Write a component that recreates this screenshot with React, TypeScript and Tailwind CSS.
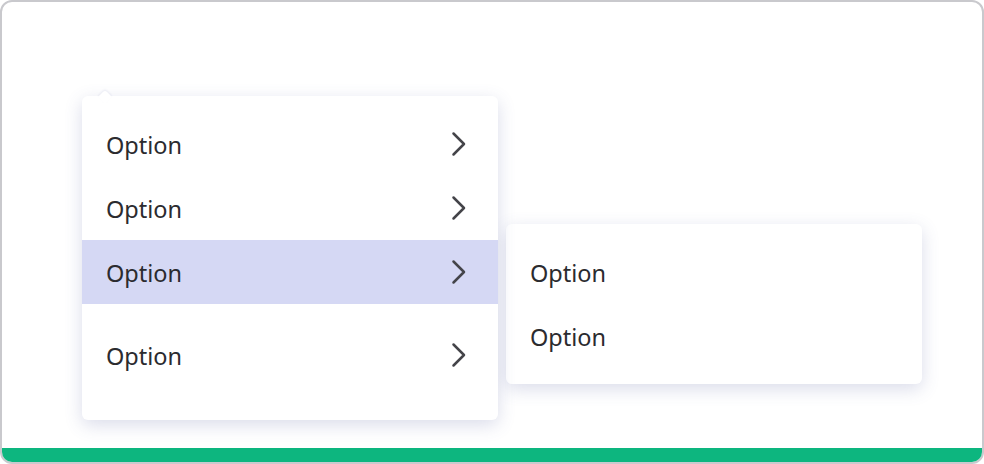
const font = { fontFamily: '"Noto Sans", "Open Sans", sans-serif' };

function Chevron() {
    return (
        <svg width="16" height="26" viewBox="0 0 16 26" fill="none" className="text-[#444449]">
            <path d="M2.5 2.5 L13 13 L2.5 23.5" stroke="currentColor" strokeWidth="2.5" strokeLinecap="round" strokeLinejoin="round" />
        </svg>
    );
}

function Row({ active, chevron = true, className = "" }: { active?: boolean; chevron?: boolean; className?: string }) {
    return (
        <div
            className={`flex h-16 items-center justify-between pl-6 pr-[31px] ${active ? "bg-[#d5d8f4]" : ""} ${className}`}
        >
            <span className="pt-[3px] text-[23.5px] leading-none text-[#2b2b2f]">Option</span>
            {chevron && <Chevron />}
        </div>
    );
}

export default function App() {
    return (
        <div className="h-[464px] w-[984px] bg-white" style={font}>
            <div className="flex h-full flex-col overflow-hidden rounded-[12px] border-2 border-[#c9c9cd]">
                <div className="flex flex-1 items-start pl-20 pt-[94px]">
                    <div className="relative w-[416px] rounded-[6px] bg-white pb-[33px] pt-4 shadow-[0_5px_18px_rgba(70,80,150,0.2)]">
                        <div className="absolute left-[18px] top-[-4px] h-[10px] w-[10px] rotate-45 rounded-tl-[3px] bg-white shadow-[-1px_-1px_2px_rgba(70,80,150,0.08)]" />
                        <Row />
                        <Row />
                        <Row active />
                        <Row className="mt-[19px]" />
                    </div>
                    <div className="ml-2 mt-32 w-[416px] rounded-[6px] bg-white py-4 shadow-[0_5px_18px_rgba(70,80,150,0.2)]">
                        <Row chevron={false} />
                        <Row chevron={false} />
                    </div>
                </div>
                <div className="h-[14px] bg-[#0db67f]" />
            </div>
        </div>
    );
}
